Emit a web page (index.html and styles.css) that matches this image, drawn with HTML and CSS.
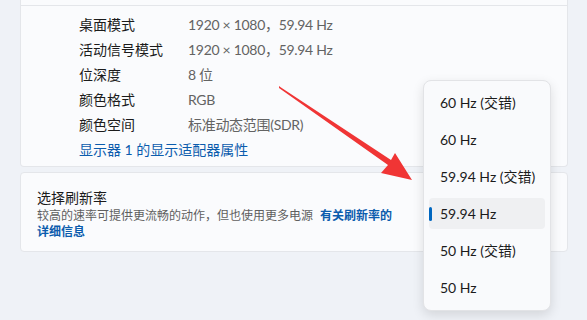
FILE: index.html
```html
<!DOCTYPE html>
<html lang="zh-CN">
<head>
    <meta charset="UTF-8">
    <title>高级显示设置</title>
    <link rel="stylesheet" href="styles.css">
</head>
<body>
    <div class="page">
        <div class="card info-card">
            <div class="card-top"></div>
            <div class="info-list">
                <div class="info-row">
                    <span class="label">桌面模式</span>
                    <span class="value">1920 × 1080，59.94 Hz</span>
                </div>
                <div class="info-row">
                    <span class="label">活动信号模式</span>
                    <span class="value">1920 × 1080，59.94 Hz</span>
                </div>
                <div class="info-row">
                    <span class="label">位深度</span>
                    <span class="value">8 位</span>
                </div>
                <div class="info-row">
                    <span class="label">颜色格式</span>
                    <span class="value">RGB</span>
                </div>
                <div class="info-row">
                    <span class="label">颜色空间</span>
                    <span class="value">标准动态范围(SDR)</span>
                </div>
                <div class="info-row">
                    <a class="link" href="#">显示器 1 的显示适配器属性</a>
                </div>
            </div>
        </div>

        <div class="card rate-card">
            <div class="rate-title">选择刷新率</div>
            <div class="rate-desc">较高的速率可提供更流畅的动作，但也使用更多电源<a class="link bold more" href="#">有关刷新率的详细信息</a></div>
        </div>
    </div>

    <svg class="arrow" width="587" height="320" viewBox="0 0 587 320">
        <polygon points="279,86 281,87.5 391,160 395,153 412,180 381,173 388,165 279,88" fill="#f03535"/>
    </svg>

    <div class="dropdown">
        <div class="option">60 Hz (交错)</div>
        <div class="option">60 Hz</div>
        <div class="option">59.94 Hz (交错)</div>
        <div class="option selected">59.94 Hz</div>
        <div class="option">50 Hz (交错)</div>
        <div class="option">50 Hz</div>
    </div>
</body>
</html>
```

FILE: styles.css
```css
body {
    margin: 0;
    padding: 0;
    background-color: #eff2f7;
    font-family: "Segoe UI", Lato, "Noto Sans CJK SC", sans-serif;
    color: #1b1b1b;
    width: 587px;
    height: 320px;
    overflow: hidden;
    position: relative;
}
.page {
    padding: 0 19px 0 20px;
}
.card {
    background-color: #fafbfd;
    border: 1px solid #e4e6ea;
    border-radius: 4px;
}
.info-card {
    border-top: none;
    border-radius: 0 0 4px 4px;
    height: 167px;
    box-sizing: border-box;
}
.card-top {
    height: 5px;
    border-bottom: 1px solid #e4e6ea;
}
.info-list {
    padding: 6px 0 0 58px;
}
.info-row {
    display: flex;
    height: 25px;
    line-height: 25px;
    font-size: 14px;
}
.label {
    width: 109px;
}
.value {
    color: #636363;
    letter-spacing: -0.3px;
}
.link {
    color: #0b5cad;
    text-decoration: none;
}
.bold {
    font-weight: bold;
}
.rate-card {
    margin-top: 5px;
    height: 80px;
    box-sizing: border-box;
    padding: 15px 0 0 16px;
}
.rate-title {
    font-size: 14px;
    line-height: 20px;
}
.rate-desc {
    width: 362px;
    font-size: 12px;
    line-height: 16px;
    color: #5f5f5f;
}
.rate-desc .more {
    margin-left: 7px;
}
.arrow {
    position: absolute;
    left: 0;
    top: 0;
}
.dropdown {
    position: absolute;
    left: 423px;
    top: 80px;
    width: 128px;
    height: 231px;
    box-sizing: border-box;
    padding: 6px 5px;
    display: flex;
    flex-direction: column;
    gap: 6px;
    background-color: #f9fafc;
    border: 1px solid #e2e3e6;
    border-radius: 8px;
    box-shadow: 0 4px 12px rgba(0, 0, 0, 0.12);
}
.option {
    position: relative;
    height: 31px;
    line-height: 31px;
    flex-shrink: 0;
    padding-left: 11px;
    font-size: 14px;
    border-radius: 4px;
    white-space: nowrap;
}
.option.selected {
    background-color: #eff0f2;
}
.option.selected::before {
    content: "";
    position: absolute;
    left: 0;
    top: 9px;
    width: 3px;
    height: 14px;
    border-radius: 2px;
    background-color: #0067c0;
}
```
